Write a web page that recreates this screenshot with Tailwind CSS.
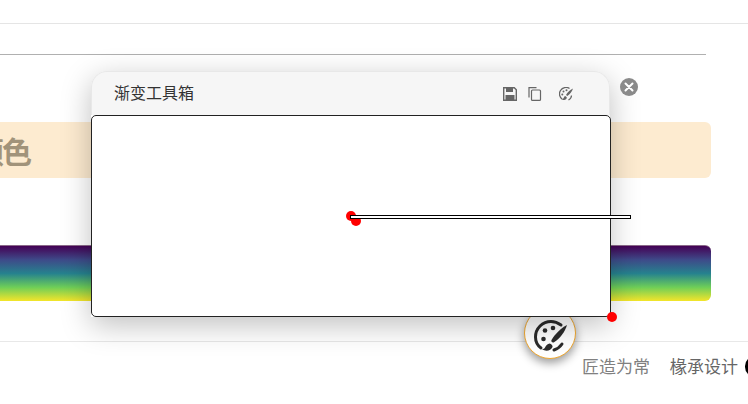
<!DOCTYPE html>
<html lang="zh">
<head>
  <meta charset="UTF-8">
  <title>渐变工具箱</title>
  <script src="https://cdn.jsdelivr.net/npm/@tailwindcss/browser@4"></script>
</head>
<body class="relative w-[748px] h-[404px] overflow-hidden bg-white font-['Noto_Sans_CJK_SC','Liberation_Sans',sans-serif]">
  <!-- page behind the panel -->
  <div class="h-[24px] border-b border-[#e5e5e5]"></div>
  <div class="h-[31px] w-[706px] border-b border-[#b0b0b0]"></div>
  <div class="mt-[67px] flex h-[56px] w-[711px] items-center overflow-hidden rounded-r-md bg-[#fdebd0]">
    <span class="-ml-[26px] whitespace-nowrap text-[30px] font-bold leading-none tracking-[-2px] text-[#a1937a]">颜色</span>
  </div>
  <div class="mt-[67px] h-[56px] w-[711px] rounded-r-md border-t border-[#8a6a8a] bg-[linear-gradient(to_bottom,#440154,#3e4a89,#26828e,#6ece58,#f4e52a)]"></div>
  <div class="mt-[40px] flex h-[63px] items-start justify-end border-t border-[#e8e8e8] pt-[11px]">
    <span class="text-[17px] leading-[26px] text-[#808080]">匠造为常</span>
    <span class="ml-[20px] text-[17px] leading-[26px] text-[#666]">椽承设计</span>
    <span class="ml-[7px] mr-[-17px] mt-[3px] h-[21px] w-[20px] shrink-0 rounded-full bg-black"></span>
  </div>

  <!-- floating palette button -->
  <div class="absolute left-[524px] top-[307px] flex h-[52px] w-[52px] items-center justify-center rounded-full border border-[#f0a830] bg-white shadow-[0_4px_10px_rgba(0,0,0,0.4)]">
    <svg viewBox="0 0 34 34" class="ml-[2px] mt-[8px] h-[34px] w-[34px]" fill="#2b2b2b">
      <path fill="none" stroke="#2b2b2b" stroke-width="3" stroke-linecap="round" d="M27 5C24 2.800 20.500 1.500 17 1.500 8.500 1.500 1.500 8.500 1.500 17c0 4.500 2 8.500 5.500 11"/>
      <circle cx="11" cy="10.500" r="2.300"/><circle cx="19" cy="8" r="2.300"/><circle cx="9.500" cy="19" r="2.300"/>
      <path d="M33 5C27 8 21 14 17.500 20c-.8 1.500 1 3 2.500 2.200C26 18.500 31 12 33 5z"/>
      <path d="M15.500 23.500c-3 .5-3.500 2.500-4.500 4-.5 1-1.500 1.500-3 1.800 3.500 2.500 9 1.700 10.500-2.300.5-1.500-1-3-3-3.500z"/>
      <path fill="none" stroke="#2b2b2b" stroke-width="3" stroke-linecap="round" d="M28 24c-2 3-5 5-8 6"/>
    </svg>
  </div>

  <!-- gradient toolbox panel -->
  <div class="absolute left-[91px] top-[71px] w-[519px] rounded-t-[16px] bg-white shadow-[0_8px_30px_rgba(0,0,0,0.25)]">
    <div class="flex h-[44px] items-center rounded-t-[16px] border border-b-0 border-[#e8e8e8] bg-[#f6f6f6] pb-[3px] pl-[22px]">
      <span class="text-[16px] leading-none text-[#333]">渐变工具箱</span>
      <div class="ml-[309px] mt-[3px] flex items-center text-[#666]">
        <svg viewBox="0 0 14 14" class="h-[14px] w-[14px]" fill="none" stroke="currentColor" stroke-width="1.400"><path d="M.7.700h10.600l2 2v10.600H.7z"/><path fill="currentColor" stroke="none" d="M3 1h7v4H3zM2.500 8h9v5h-9z"/></svg>
        <svg viewBox="0 0 14 14" class="ml-[11px] h-[14px] w-[14px]" fill="none" stroke="currentColor" stroke-width="1.200"><path d="M1 10.500V.7h7.500"/><rect x="3.500" y="3" width="9" height="10.400" rx="1"/></svg>
        <svg viewBox="0 0 14 14" class="ml-[17px] h-[14px] w-[14px]" fill="currentColor"><path fill="none" stroke="currentColor" stroke-width="1.300" d="M10.500 1.500A6.300 6.300 0 1 0 3.500 12.500"/><circle cx="4.500" cy="4.500" r="1"/><circle cx="7.500" cy="3.200" r="1"/><circle cx="3.300" cy="7.500" r="1"/><path d="M14 1.500c-3 1.500-5.500 3.800-7 6.500l1.300 1c2.700-1.500 4.700-4.500 5.700-7.500zM6.200 9c-1.500.5-1 2.500-3 3.500 2.200 1.200 4.600.2 4.600-2.200z"/><path fill="none" stroke="currentColor" stroke-width="1.200" d="M12.500 8.500c0 2-1.300 3.500-3 4.500"/></svg>
      </div>
    </div>
    <div class="h-[202px] w-[520px] rounded-[5px] border border-[#222] bg-white"></div>
  </div>

  <!-- close button -->
  <button class="absolute left-[620px] top-[78px] flex h-[18px] w-[18px] items-center justify-center rounded-full bg-[#8a8a8a]">
    <svg viewBox="0 0 10 10" class="h-[10px] w-[10px]" stroke="#fff" stroke-width="2" stroke-linecap="round"><path d="M1.500 1.500l7 7M8.500 1.500l-7 7"/></svg>
  </button>

  <!-- gradient stop handles on the canvas -->
  <div class="absolute left-[346px] top-[211px] h-[10px] w-[10px] rounded-full bg-[#f00]"></div>
  <div class="absolute left-[351px] top-[216px] h-[10px] w-[10px] rounded-full bg-[#f00]"></div>
  <div class="absolute left-[607px] top-[312px] h-[10px] w-[10px] rounded-full bg-[#f00]"></div>
  <div class="absolute left-[350px] top-[215px] h-[4px] w-[281px] border border-black bg-white"></div>
</body>
</html>
